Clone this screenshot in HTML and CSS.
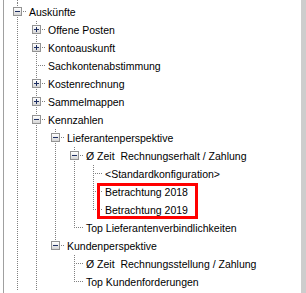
FILE: index.html
```html
<!DOCTYPE html>
<html lang="de">

<head>
    <meta charset="UTF-8">
    <title>Auskünfte</title>
    <link rel="stylesheet" href="styles.css">
</head>

<body>
    <div class="pane">
        <div class="tree">
            <div class="row lead"><span class="cell pipe"></span></div>

            <div class="row">
                <span class="cell joint"><span class="exp open"></span></span>
                <span class="label">Auskünfte</span>
            </div>
            <div class="row">
                <span class="cell pipe"></span>
                <span class="cell joint"><span class="exp"></span></span>
                <span class="label">Offene Posten</span>
            </div>
            <div class="row">
                <span class="cell pipe"></span>
                <span class="cell joint"><span class="exp"></span></span>
                <span class="label">Kontoauskunft</span>
            </div>
            <div class="row">
                <span class="cell pipe"></span>
                <span class="cell joint"></span>
                <span class="label">Sachkontenabstimmung</span>
            </div>
            <div class="row">
                <span class="cell pipe"></span>
                <span class="cell joint"><span class="exp"></span></span>
                <span class="label">Kostenrechnung</span>
            </div>
            <div class="row">
                <span class="cell pipe"></span>
                <span class="cell joint"><span class="exp"></span></span>
                <span class="label">Sammelmappen</span>
            </div>
            <div class="row">
                <span class="cell pipe"></span>
                <span class="cell joint"><span class="exp open"></span></span>
                <span class="label">Kennzahlen</span>
            </div>

            <!-- Kennzahlen -->
            <div class="row">
                <span class="cell pipe"></span>
                <span class="cell pipe"></span>
                <span class="cell joint"><span class="exp open"></span></span>
                <span class="label">Lieferantenperspektive</span>
            </div>
            <div class="row">
                <span class="cell pipe"></span>
                <span class="cell pipe"></span>
                <span class="cell pipe"></span>
                <span class="cell joint"><span class="exp open"></span></span>
                <span class="label">Ø Zeit  Rechnungserhalt / Zahlung</span>
            </div>
            <div class="row">
                <span class="cell pipe"></span>
                <span class="cell pipe"></span>
                <span class="cell pipe"></span>
                <span class="cell pipe"></span>
                <span class="cell joint"></span>
                <span class="label">&lt;Standardkonfiguration&gt;</span>
            </div>
            <div class="row">
                <span class="cell pipe"></span>
                <span class="cell pipe"></span>
                <span class="cell pipe"></span>
                <span class="cell pipe"></span>
                <span class="cell joint"></span>
                <span class="label mark first">Betrachtung 2018</span>
            </div>
            <div class="row">
                <span class="cell pipe"></span>
                <span class="cell pipe"></span>
                <span class="cell pipe"></span>
                <span class="cell pipe"></span>
                <span class="cell joint end"></span>
                <span class="label mark last">Betrachtung 2019</span>
            </div>
            <div class="row">
                <span class="cell pipe"></span>
                <span class="cell pipe"></span>
                <span class="cell pipe"></span>
                <span class="cell joint end"></span>
                <span class="label">Top Lieferantenverbindlichkeiten</span>
            </div>
            <div class="row">
                <span class="cell pipe"></span>
                <span class="cell pipe"></span>
                <span class="cell joint end"><span class="exp open"></span></span>
                <span class="label">Kundenperspektive</span>
            </div>
            <div class="row">
                <span class="cell pipe"></span>
                <span class="cell pipe"></span>
                <span class="cell"></span>
                <span class="cell joint"></span>
                <span class="label">Ø Zeit  Rechnungsstellung / Zahlung</span>
            </div>
            <div class="row">
                <span class="cell pipe"></span>
                <span class="cell pipe"></span>
                <span class="cell"></span>
                <span class="cell joint end"></span>
                <span class="label">Top Kundenforderungen</span>
            </div>
        </div>
        <div class="scroll"></div>
    </div>
</body>

</html>
```

FILE: styles.css
```css
body {
    margin: 0;
    background-color: #fff;
    font-family: "Liberation Sans", Arial, sans-serif;
    font-size: 10.5px;
    color: #000;
}

.pane {
    display: flex;
    height: 293px;
    overflow: hidden;
}

.tree {
    flex: 1;
    margin-left: 3px;
    padding-left: 4px;
    border-left: 1px solid #a0a0a0;
}

.scroll {
    width: 5px;
    background-color: #cdcdcd;
}

.row {
    display: flex;
    height: 18px;
}

.lead {
    height: 3px;
}

.cell {
    flex: none;
    width: 19px;
    display: flex;
    align-items: flex-start;
}

/* dotted guide lines */
.pipe {
    background: repeating-linear-gradient(to bottom, #808080 0 1px, transparent 1px 2px) 9px 0 / 1px 100% no-repeat;
}

.joint {
    background:
        repeating-linear-gradient(to right, #808080 0 1px, transparent 1px 2px) 9px 8px / 10px 1px no-repeat,
        repeating-linear-gradient(to bottom, #808080 0 1px, transparent 1px 2px) 9px 0 / 1px 100% no-repeat;
}

.joint.end {
    background-size: 10px 1px, 1px 9px;
}

/* expand / collapse box */
.exp {
    width: 9px;
    height: 9px;
    box-sizing: border-box;
    margin: 4px 0 0 5px;
    border: 1px solid #939393;
    background:
        linear-gradient(#1e2f62, #1e2f62) center / 1px 5px no-repeat,
        linear-gradient(#1e2f62, #1e2f62) center / 5px 1px no-repeat,
        linear-gradient(#ffffff, #d6d6d6);
}

.exp.open {
    background:
        linear-gradient(#1e2f62, #1e2f62) center / 5px 1px no-repeat,
        linear-gradient(#ffffff, #d6d6d6);
}

.label {
    padding-left: 2px;
    line-height: 18px;
    white-space: pre;
}

/* red marker round the two entries */
.mark {
    width: 101px;
    box-sizing: border-box;
    margin-left: -6px;
    padding-left: 5px;
    border: 3px solid #ff0000;
    line-height: 12px;
}

.mark.first {
    border-bottom: 0;
    padding-bottom: 3px;
}

.mark.last {
    border-top: 0;
    padding-top: 3px;
}
```
